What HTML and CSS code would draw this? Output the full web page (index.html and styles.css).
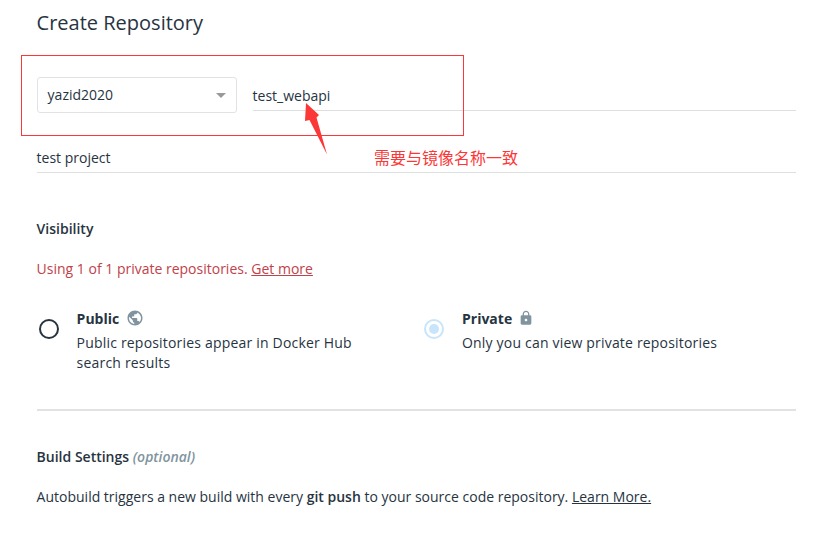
FILE: index.html
```html
<!DOCTYPE html>
<html lang="en">
<head>
<meta charset="utf-8">
<title>Create Repository</title>
<link rel="stylesheet" href="styles.css">
</head>
<body>
<main class="page">
  <h1 class="title">Create Repository</h1>
  <div class="name-row">
    <div class="select"><span>yazid2020</span><svg width="10" height="5" viewBox="0 0 10 5"><path d="M0 0h10L5 5z" fill="#999"/></svg></div>
    <div class="field name">test_webapi</div>
  </div>
  <div class="field description">test project</div>

  <h2 class="heading visibility">Visibility</h2>
  <p class="usage">Using 1 of 1 private repositories. <a href="#">Get more</a></p>
  <div class="options">
    <div class="option">
      <span class="radio"></span>
      <div>
        <div class="label">Public
          <svg class="globe" width="18" height="18" viewBox="0 0 24 24"><path fill="#8094a0" d="M12 2C6.48 2 2 6.48 2 12s4.48 10 10 10 10-4.480 10-10S17.520 2 12 2zm-1 17.930c-3.950-.49-7-3.850-7-7.930 0-.62.080-1.210.21-1.790L9 15v1c0 1.100.9 2 2 2v1.930zm6.900-2.540c-.26-.81-1-1.390-1.900-1.390h-1v-3c0-.55-.45-1-1-1H8v-2h2c.55 0 1-.45 1-1V7h2c1.100 0 2-.9 2-2v-.41c2.930 1.190 5 4.060 5 7.410 0 2.080-.8 3.970-2.100 5.390z"/></svg>
        </div>
        <p class="detail">Public repositories appear in Docker Hub search results</p>
      </div>
    </div>
    <div class="option">
      <span class="radio checked"></span>
      <div>
        <div class="label">Private
          <svg class="lock" width="16" height="16" viewBox="0 0 24 24"><path fill="#8094a0" d="M18 8h-1V6c0-2.760-2.240-5-5-5S7 3.240 7 6v2H6c-1.100 0-2 .9-2 2v10c0 1.100.9 2 2 2h12c1.100 0 2-.9 2-2V10c0-1.100-.9-2-2-2zm-6 9c-1.100 0-2-.9-2-2s.9-2 2-2 2 .9 2 2-.9 2-2 2zm3.100-9H8.900V6c0-1.710 1.390-3.100 3.100-3.100s3.100 1.390 3.100 3.100v2z"/></svg>
        </div>
        <p class="detail">Only you can view private repositories</p>
      </div>
    </div>
  </div>

  <h2 class="heading build">Build Settings <em>(optional)</em></h2>
  <p class="autobuild">Autobuild triggers a new build with every <b>git push</b> to your source code repository. <a href="#">Learn More.</a></p>
</main>
<div class="highlight"></div>
<svg class="arrow" width="26" height="54" viewBox="0 0 26 54"><path fill="#fc3737" d="M4 0L17 12L14.500 14.500L25 51.500L7.500 17L3 18z"/></svg>
<div class="note" lang="zh-CN">需要与镜像名称一致</div>
</body>
</html>
```
FILE: styles.css
```css
* { box-sizing: border-box; }
body {
  margin: 0;
  background: #fff;
  color: #27343f;
  font: 14px/20px "Open Sans", sans-serif;
}
h1, h2, p { margin: 0; }
a { color: inherit; text-decoration: underline; }
.page { width: 796px; padding: 9px 0 0 36.6px; }
.title { font-size: 20px; line-height: 28px; font-weight: 400; }
.name-row { display: flex; gap: 16px; margin-top: 40px; }
.select {
  display: flex;
  align-items: center;
  justify-content: space-between;
  width: 200px;
  height: 36px;
  padding: 0 9.600px 0 10px;
  border: 1px solid #e1e2e6;
  border-radius: 3px;
}
.field { border-bottom: 1px solid #dedfe1; }
.name { flex: 1; height: 34px; padding-top: 9px; }
.description { height: 25px; margin-top: 35px; }
.heading { font-size: 14px; font-weight: 600; }
.visibility { margin-top: 46px; }
.usage { margin-top: 20px; color: #c0424a; }
.options {
  display: grid;
  grid-template-columns: 385.400px 1fr;
  height: 132px;
  padding-top: 30px;
  border-bottom: 2px solid #e1e2e6;
}
.option { display: flex; gap: 18px; padding-left: 2px; }
.radio {
  display: flex;
  flex: none;
  align-items: center;
  justify-content: center;
  width: 20px;
  height: 20px;
  margin-top: 10px;
  border: 2px solid #27343f;
  border-radius: 50%;
}
.checked { border-color: #c8e5fb; }
.checked::before {
  width: 10px;
  height: 10px;
  border-radius: 50%;
  background: #c8e5fb;
  content: "";
}
.label { display: flex; align-items: center; height: 20px; font-weight: 700; }
.globe { margin: -2px 0 0 6.400px; }
.lock { margin: -2px 0 0 6px; }
.detail { width: 290px; margin-top: 4px; letter-spacing: 0.190px; }
.build { margin-top: 36px; }
.build em { color: #8094a0; }
.autobuild { margin-top: 20px; }
.autobuild b { font-weight: 600; }
.highlight {
  position: absolute;
  top: 55px;
  left: 21px;
  width: 443px;
  height: 81px;
  border: 1px solid #fc3737;
}
.arrow { position: absolute; top: 103px; left: 302px; }
.note {
  position: absolute;
  top: 147px;
  left: 374px;
  color: #fc3737;
  font: 16px/20px "Noto Sans CJK SC", sans-serif;
}
```
